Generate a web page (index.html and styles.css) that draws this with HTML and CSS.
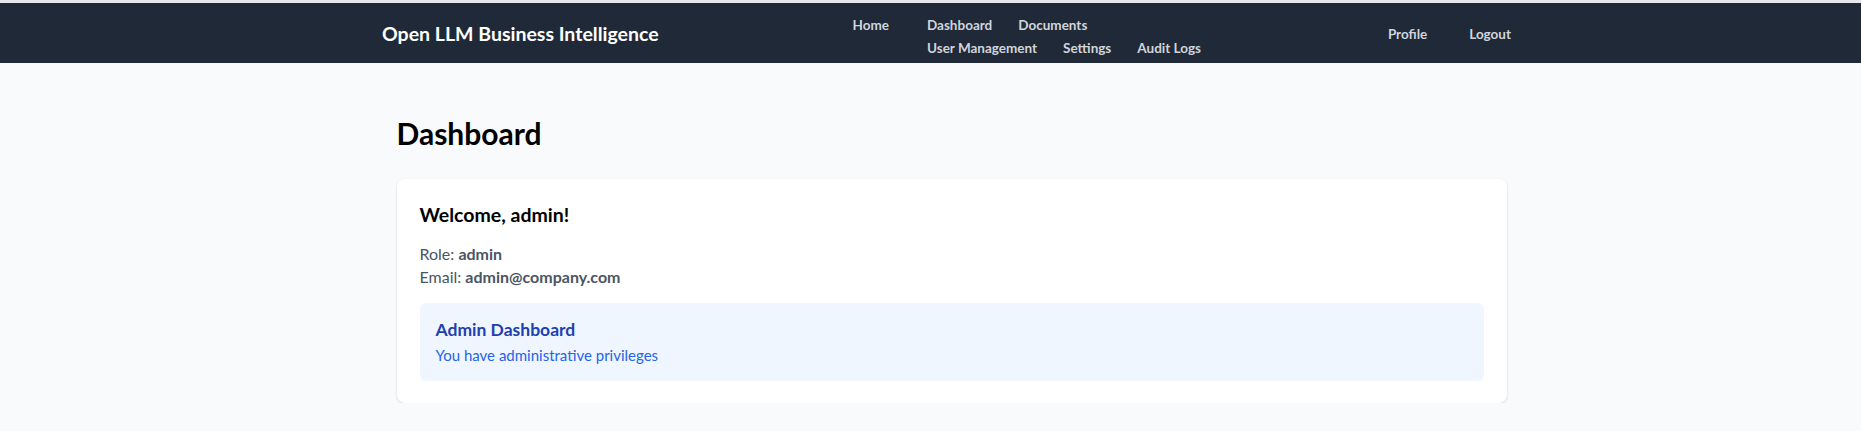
FILE: index.html
```html
<!DOCTYPE html>
<html lang="en">
<head>
<meta charset="utf-8">
<title>Open LLM Business Intelligence</title>
<link rel="stylesheet" href="styles.css">
</head>
<body>
<nav class="nav">
  <div class="nav-inner">
    <a class="brand" href="#">Open LLM Business Intelligence</a>
    <div class="nav-links">
      <a class="nav-link home" href="#">Home</a>
      <div class="nav-group">
        <a class="nav-link" href="#">Dashboard</a>
        <a class="nav-link" href="#">Documents</a>
        <a class="nav-link" href="#">User Management</a>
        <a class="nav-link" href="#">Settings</a>
        <a class="nav-link" href="#">Audit Logs</a>
      </div>
    </div>
    <div class="nav-right">
      <a class="nav-link" href="#">Profile</a>
      <a class="nav-link" href="#">Logout</a>
    </div>
  </div>
</nav>
<main class="main">
  <h1 class="page-title">Dashboard</h1>
  <section class="card">
    <h2 class="welcome">Welcome, admin!</h2>
    <p class="info">Role: <strong>admin</strong></p>
    <p class="info">Email: <strong>admin@company.com</strong></p>
    <div class="admin-box">
      <h3 class="admin-title">Admin Dashboard</h3>
      <p class="admin-text">You have administrative privileges</p>
    </div>
  </section>
</main>
</body>
</html>
```
FILE: styles.css
```css
* { box-sizing: border-box; }
html, body { margin: 0; padding: 0; }
body {
  background: #f9fafb;
  font-family: "Lato", "Open Sans", sans-serif;
  color: #111827;
  border-top: 3px solid #e5e7eb;
}
a { text-decoration: none; }

.nav {
  background: #1f2937;
  height: 60px;
}
.nav-inner {
  max-width: 1161px;
  margin: 0 auto;
  padding-left: 32px;
  height: 100%;
  display: flex;
  align-items: center;
  justify-content: space-between;
}
.brand {
  color: #ffffff;
  font-size: 19.5px;
  font-weight: 700;
  white-space: nowrap;
}
.nav-links {
  display: flex;
  align-items: flex-start;
  gap: 38px;
  margin-top: 7px;
  margin-left: 9px;
}
.nav-group {
  display: flex;
  flex-wrap: wrap;
  width: 276px;
  column-gap: 26px;
  row-gap: 3px;
}
.nav-link {
  color: #d1d5db;
  font-size: 13.5px;
  font-weight: 700;
  line-height: 20px;
  white-space: nowrap;
}
.nav-right {
  display: flex;
  gap: 42px;
  margin-top: 2px;
}

.main {
  max-width: 1152px;
  margin: 0 auto;
  padding: 50px 0 0 42px;
}
.page-title {
  margin: 0 0 26px 0;
  font-size: 30px;
  line-height: 40px;
  font-weight: 700;
  color: #000;
}
.card {
  background: #fff;
  border-radius: 8px;
  box-shadow: 0 1px 3px rgba(0,0,0,0.1), 0 1px 2px rgba(0,0,0,0.06);
  padding: 22px 23px 22px 23px;
}
.welcome {
  margin: 0 0 13px 0;
  font-size: 19.5px;
  line-height: 28px;
  font-weight: 700;
  color: #000;
}
.info {
  margin: 0;
  font-size: 16px;
  line-height: 23px;
  color: #4b5563;
}
.info strong { font-weight: 700; }
.admin-box {
  margin-top: 15px;
  background: #eff6ff;
  border-radius: 6px;
  padding: 14px 16px 14px 16px;
}
.admin-title {
  margin: 0;
  font-size: 17.5px;
  line-height: 26px;
  font-weight: 700;
  color: #1e40af;
}
.admin-text {
  margin: 0;
  font-size: 15px;
  line-height: 24px;
  color: #2563eb;
}
```
